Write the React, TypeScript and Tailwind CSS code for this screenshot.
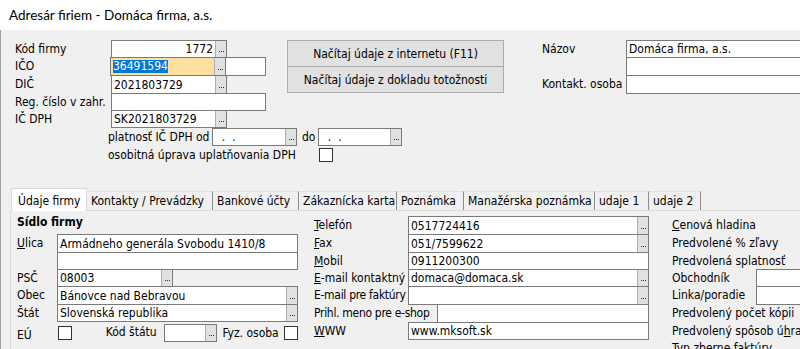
import React from "react";

type BoxProps = {
  cls: string;
  bg?: string;
  btn?: boolean;
  right?: boolean;
  children?: React.ReactNode;
};

function Dots() {
  return (
    <div className="flex h-full w-[11px] shrink-0 items-end justify-center gap-px border-l border-[#adadad] bg-[#e1e1e1] pb-[5px]">
      <span className="h-px w-px bg-[#333]" />
      <span className="h-px w-px bg-[#333]" />
      <span className="h-px w-px bg-[#333]" />
    </div>
  );
}

function Box({ cls, bg = "bg-white", btn, right, children }: BoxProps) {
  return (
    <div className={`flex shrink-0 border border-[#7a7a7a] ${bg} ${cls}`}>
      <div
        className={`flex min-w-0 flex-1 items-center overflow-hidden whitespace-pre px-[2px] ${
          right ? "justify-end" : ""
        }`}
      >
        {children}
      </div>
      {btn && <Dots />}
    </div>
  );
}

function Check({ cls = "" }: { cls?: string }) {
  return <div className={`h-[14px] w-[14px] shrink-0 border border-[#333] bg-white ${cls}`} />;
}

const TABS = [
  { name: "Kontakty / Prevádzky", w: "w-[126px]" },
  { name: "Bankové účty", w: "w-[86px]" },
  { name: "Zákaznícka karta", w: "w-[98px]" },
  { name: "Poznámka", w: "w-[67px]" },
  { name: "Manažérska poznámka", w: "w-[131px]" },
  { name: "udaje 1", w: "w-[54px]" },
  { name: "udaje 2", w: "w-[52px]" },
];

export default function App() {
  return (
    <div className="h-[349px] w-[800px] overflow-hidden bg-[#f0f0f0] font-['DejaVu_Sans_Condensed','DejaVu_Sans',sans-serif] text-[12px] text-black">
      {/* title bar */}
      <div className="flex h-[30px] items-center bg-white pl-[9px] font-['Lato',sans-serif] text-[13.5px]">
        Adresár firiem - Domáca firma, a.s.
      </div>

      <div className="flex h-[319px] flex-col border-l border-[#a0a0a0]">
        {/* header fields */}
        <div className="flex pt-[10px]">
          <div className="ml-[14px] flex w-[251px] shrink-0 flex-col">
            <div className="flex h-[17px]">
              <div className="w-[96px] leading-[18px]">Kód firmy</div>
              <Box cls="w-[116px] h-[18px]" btn right>1772</Box>
            </div>
            <div className="flex h-[18px]">
              <div className="w-[96px] leading-[19px]">IČO</div>
              <Box cls="w-[116px] h-[19px]" bg="bg-[#ffdf9f]" btn>
                <span className="bg-[#0078d7] leading-[13px] text-white">36491594</span>
              </Box>
              <div className="-ml-px">
                <Box cls="w-[41px] h-[19px]" />
              </div>
            </div>
            <div className="flex h-[18px]">
              <div className="w-[96px] leading-[19px]">DIČ</div>
              <Box cls="w-[116px] h-[19px]" btn>2021803729</Box>
            </div>
            <div className="flex h-[17px]">
              <div className="w-[96px] whitespace-nowrap leading-[18px]">Reg. číslo v zahr.</div>
              <Box cls="w-[155px] h-[18px]" />
            </div>
            <div className="flex h-[17px]">
              <div className="w-[96px] leading-[18px]">IČ DPH</div>
              <Box cls="w-[116px] h-[18px]" btn>SK2021803729</Box>
            </div>
          </div>

          <div className="ml-[21px] flex w-[217px] shrink-0 flex-col">
            <div className="flex h-[27px] items-center justify-center border border-[#adadad] bg-[#e1e1e1]">
              Načítaj údaje z internetu (F11)
            </div>
            <div className="-mt-px flex h-[27px] items-center justify-center border border-[#adadad] bg-[#e1e1e1]">
              Načítaj údaje z dokladu totožnosti
            </div>
          </div>

          <div className="ml-[38px] flex flex-col">
            <div className="flex h-[17px]">
              <div className="w-[84px] leading-[18px]">Názov</div>
              <Box cls="w-[180px] h-[18px]">Domáca firma, a.s.</Box>
            </div>
            <div className="flex h-[18px]">
              <div className="w-[84px]" />
              <Box cls="w-[180px] h-[19px]" />
            </div>
            <div className="flex h-[18px]">
              <div className="w-[84px] whitespace-nowrap leading-[19px]">Kontakt. osoba</div>
              <Box cls="w-[180px] h-[19px]" />
            </div>
          </div>
        </div>

        <div className="ml-[107px] mt-px flex h-[18px]">
          <div className="w-[104px] whitespace-nowrap leading-[18px]">platnosť IČ DPH od</div>
          <Box cls="w-[85px] h-[18px]" btn>{"  .  ."}</Box>
          <div className="ml-[5px] w-[16px] leading-[18px]">do</div>
          <Box cls="w-[84px] h-[18px]" btn>{"  .  ."}</Box>
        </div>

        <div className="ml-[107px] mt-[2px] flex h-[14px] items-center">
          <div className="w-[211px] whitespace-nowrap">osobitná úprava uplatňovania DPH</div>
          <Check />
        </div>

        {/* tabs */}
        <div className="ml-[10px] mt-[26px] flex h-[22px] items-end">
          <div className="relative z-10 flex h-[23px] w-[76px] shrink-0 self-start border-x border-t border-[#d9d9d9] bg-white pl-[6px] pt-[3px]">
            Údaje firmy
          </div>
          {TABS.map((t) => (
            <div
              key={t.name}
              className={`flex h-[19px] shrink-0 items-center whitespace-nowrap border-r border-t border-r-[#8c8c8c] border-t-[#e3e3e3] pl-[4px] ${t.w}`}
            >
              {t.name}
            </div>
          ))}
        </div>

        {/* panel */}
        <div className="ml-[9px] flex flex-1 border-l border-t border-[#d9d9d9]">
          {/* column 1 */}
          <div className="ml-[6px] flex w-[281px] shrink-0 flex-col">
            <div className="h-[23px] font-bold leading-[23px]">Sídlo firmy</div>
            <div className="flex h-[18px]">
              <div className="w-[40px] leading-[19px]">
                <u>U</u>lica
              </div>
              <Box cls="w-[241px] h-[19px]">Armádneho generála Svobodu 1410/8</Box>
            </div>
            <div className="flex h-[17px]">
              <div className="w-[40px]" />
              <Box cls="w-[241px] h-[18px]" />
            </div>
            <div className="flex h-[17px]">
              <div className="w-[40px] leading-[18px]">PSČ</div>
              <Box cls="w-[116px] h-[18px]" btn>08003</Box>
            </div>
            <div className="flex h-[18px]">
              <div className="w-[40px] leading-[19px]">Obec</div>
              <Box cls="w-[241px] h-[19px]" btn>Bánovce nad Bebravou</Box>
            </div>
            <div className="flex h-[17px]">
              <div className="w-[40px] leading-[18px]">Štát</div>
              <Box cls="w-[241px] h-[18px]" btn>Slovenská republika</Box>
            </div>
            <div className="mt-[3px] flex h-[18px] items-center">
              <div className="w-[41px] pt-[3px]">EÚ</div>
              <Check />
              <div className="ml-[34px] w-[59px] whitespace-nowrap pb-[2px]">Kód štátu</div>
              <Box cls="w-[53px] h-[18px]" btn />
              <div className="ml-[5px] w-[62px] whitespace-nowrap">Fyz. osoba</div>
              <Check />
            </div>
          </div>

          {/* column 2 */}
          <div className="ml-[16px] mt-[5px] flex w-[335px] shrink-0 flex-col">
            <div className="flex h-[18px]">
              <div className="w-[94px] leading-[19px]">
                <u>T</u>elefón
              </div>
              <Box cls="w-[241px] h-[19px]" btn>0517724416</Box>
            </div>
            <div className="flex h-[18px]">
              <div className="w-[94px] leading-[19px]">
                <u>F</u>ax
              </div>
              <Box cls="w-[241px] h-[19px]" btn>051/7599622</Box>
            </div>
            <div className="flex h-[17px]">
              <div className="w-[94px] leading-[18px]">
                <u>M</u>obil
              </div>
              <Box cls="w-[241px] h-[18px]">0911200300</Box>
            </div>
            <div className="flex h-[17px]">
              <div className="w-[94px] whitespace-nowrap leading-[18px]">
                <u>E</u>-mail kontaktný
              </div>
              <Box cls="w-[241px] h-[18px]" btn>domaca@domaca.sk</Box>
            </div>
            <div className="flex h-[18px]">
              <div className="w-[94px] whitespace-nowrap leading-[19px] tracking-[-0.3px]">E-mail pre faktúry</div>
              <Box cls="w-[241px] h-[19px]" btn />
            </div>
            <div className="flex h-[18px]">
              <div className="w-[123px] whitespace-nowrap leading-[19px] tracking-[-0.3px]">Prihl. meno pre e-shop</div>
              <Box cls="w-[212px] h-[19px]" />
            </div>
            <div className="flex h-[17px]">
              <div className="w-[94px] leading-[18px]">
                <u>W</u>WW
              </div>
              <Box cls="w-[241px] h-[18px]">www.mksoft.sk</Box>
            </div>
          </div>

          {/* column 3 */}
          <div className="ml-[23px] mt-[5px] flex flex-col whitespace-nowrap">
            <div className="h-[18px] leading-[19px]">
              <u>C</u>enová hladina
            </div>
            <div className="h-[18px] leading-[19px]">Predvolené % zľavy</div>
            <div className="h-[17px] leading-[18px]">Predvolená splatnosť</div>
            <div className="flex h-[17px]">
              <div className="w-[84px] leading-[18px]">Obchodník</div>
              <Box cls="w-[60px] h-[18px]" />
            </div>
            <div className="flex h-[18px]">
              <div className="w-[84px] leading-[19px]">Linka/poradie</div>
              <Box cls="w-[60px] h-[19px]" />
            </div>
            <div className="h-[18px] leading-[19px]">Predvolený počet kópii</div>
            <div className="h-[17px] leading-[18px]">
              Predvolený spôsob ú<u>h</u>rady
            </div>
            <div className="h-[18px] leading-[19px]">Typ zberne faktúry</div>
          </div>
        </div>
      </div>
    </div>
  );
}
